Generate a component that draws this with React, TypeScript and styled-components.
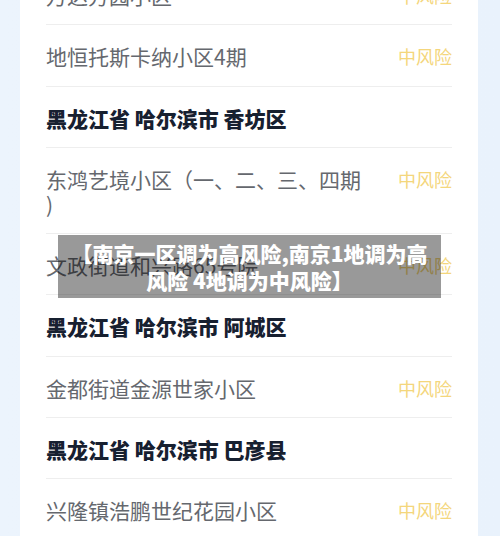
import React from "react";
import styled, { createGlobalStyle } from "styled-components";

type Item =
	| { kind: "area"; name: React.ReactNode; level: string }
	| { kind: "region"; title: string };

const items: Item[] = [
	{ kind: "area", name: "万达芳园小区", level: "中风险" },
	{ kind: "area", name: "地恒托斯卡纳小区4期", level: "中风险" },
	{ kind: "region", title: "黑龙江省 哈尔滨市 香坊区" },
	{
		kind: "area",
		name: (
			<>
				东鸿艺境小区（一、二、三、四期
				<br />)
			</>
		),
		level: "中风险",
	},
	{ kind: "area", name: "文政街道和兴路65号院", level: "中风险" },
	{ kind: "region", title: "黑龙江省 哈尔滨市 阿城区" },
	{ kind: "area", name: "金都街道金源世家小区", level: "中风险" },
	{ kind: "region", title: "黑龙江省 哈尔滨市 巴彦县" },
	{ kind: "area", name: "兴隆镇浩鹏世纪花园小区", level: "中风险" },
];

const App = () => {
	return (
		<>
			<GlobalStyle />
			<Page>
				<Card>
					{items.map((item, i) =>
						item.kind === "region" ? (
							<Row key={i}>
								<RegionTitle>{item.title}</RegionTitle>
							</Row>
						) : (
							<Row key={i}>
								<AreaName>{item.name}</AreaName>
								<RiskLevel>{item.level}</RiskLevel>
							</Row>
						)
					)}
				</Card>
				<Banner>
					【南京一区调为高风险,南京1地调为高
					<br />
					风险 4地调为中风险】
				</Banner>
			</Page>
		</>
	);
};

export default App;

const GlobalStyle = createGlobalStyle`
	html, body {
		margin: 0;
		padding: 0;
		background: #eaf2fc;
		overflow: hidden;
	}
	body {
		font-family: "Noto Sans CJK SC", "Noto Sans", sans-serif;
	}
`;

const Page = styled.div`
	position: relative;
	width: 500px;
	height: 536px;
	overflow: hidden;
	padding: 0 22px 0 20px;
	box-sizing: border-box;
	background: linear-gradient(90deg, #ecf4fd 0%, #e9f2fc 100%);
`;

const Card = styled.div`
	display: flex;
	flex-direction: column;
	margin-top: -36px;
	padding: 0 26px;
	background: #ffffff;
`;

const Row = styled.div`
	display: flex;
	justify-content: space-between;
	align-items: flex-start;
	gap: 16px;
	padding: 19px 0 16.3px;
	border-bottom: 1px solid #eeeeee;
	line-height: 25px;
`;

const AreaName = styled.div`
	font-size: 21px;
	color: #65686e;
`;

const RegionTitle = styled.div`
	font-size: 21px;
	font-weight: 900;
	color: #172030;
`;

const RiskLevel = styled.div`
	flex-shrink: 0;
	font-size: 18px;
	color: #f4d67c;
	white-space: nowrap;
`;

const Banner = styled.div`
	position: absolute;
	left: 58px;
	top: 235px;
	width: 383px;
	box-sizing: border-box;
	padding: 4.5px 6px;
	background: rgba(0, 0, 0, 0.4);
	color: #ffffff;
	font-size: 21px;
	font-weight: 900;
	line-height: 27px;
	text-align: center;
	white-space: nowrap;
`;
